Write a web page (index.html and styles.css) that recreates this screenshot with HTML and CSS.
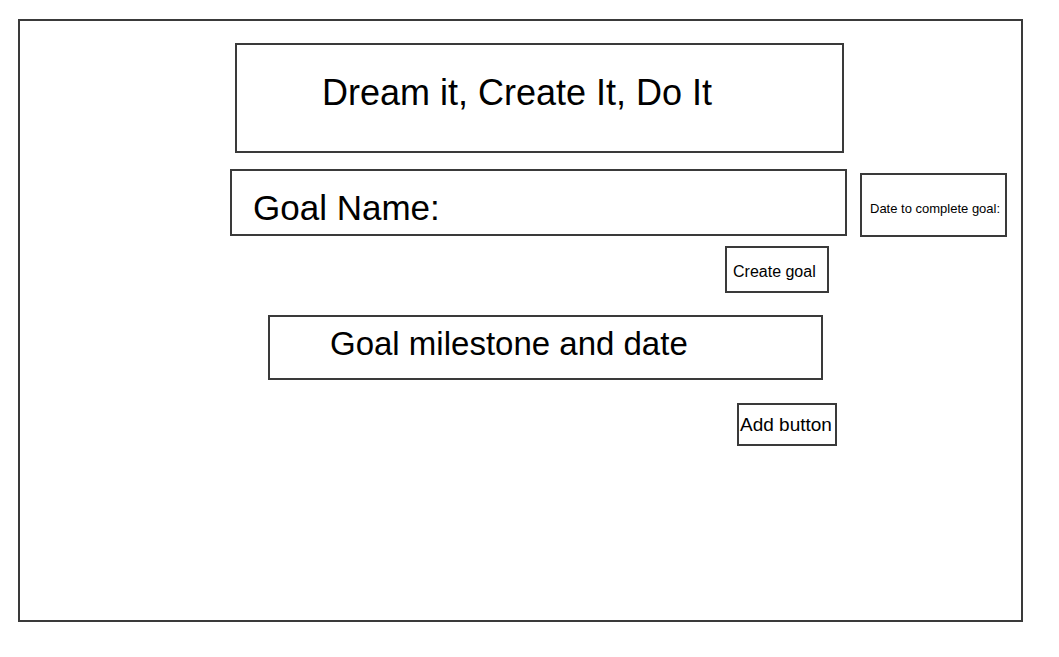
FILE: index.html
```html
<!DOCTYPE html>
<html lang="en">
<head>
    <meta charset="UTF-8">
    <meta name="viewport" content="width=device-width, initial-scale=1.0">
    <title>Dream it, Create It, Do It</title>
    <link rel="stylesheet" href="styles.css">
</head>
<body>
    <div id="frame">
        <div class="title">Dream it, Create It, Do It</div>

        <div class="goal-row">
            <div class="goal-name">Goal Name:</div>
            <div class="goal-date">Date to complete goal:</div>
        </div>

        <button class="create-btn">Create goal</button>

        <div class="milestone">Goal milestone and date</div>

        <button class="add-btn">Add button</button>
    </div>
</body>
</html>
```

FILE: styles.css
```css
* {
    box-sizing: border-box;
}
body {
    margin: 0;
    font-family: 'Liberation Sans', Arial, sans-serif;
    background-color: #fff;
    color: #000;
}
#frame {
    margin: 19px 0 0 18px;
    width: 1005px;
    height: 603px;
    border: 2px solid #3a3a3a;
}
.title,
.goal-name,
.goal-date,
.milestone,
button {
    border: 2px solid #3a3a3a;
    background: #fff;
    color: #000;
    font-family: inherit;
    line-height: normal;
}
.title {
    margin: 22px 0 0 215px;
    width: 609px;
    height: 110px;
    padding: 27px 0 0 85px;
    font-size: 36px;
}
.goal-row {
    display: flex;
    align-items: flex-start;
    margin: 16px 0 0 210px;
}
.goal-name {
    width: 617px;
    height: 67px;
    padding: 17px 0 0 21px;
    font-size: 35px;
}
.goal-date {
    margin: 4px 0 0 13px;
    width: 147px;
    height: 64px;
    padding: 26px 0 0 8px;
    font-size: 13px;
}
button {
    display: block;
    text-align: left;
    white-space: nowrap;
    cursor: pointer;
}
.create-btn {
    margin: 9px 0 0 705px;
    width: 104px;
    height: 47px;
    padding: 5px 0 0 6px;
    font-size: 16px;
}
.milestone {
    margin: 22px 0 0 248px;
    width: 555px;
    height: 65px;
    padding: 8px 0 0 60px;
    font-size: 33px;
}
.add-btn {
    margin: 23px 0 0 717px;
    width: 100px;
    height: 43px;
    padding: 0 0 0 1px;
    font-size: 19px;
}
```
